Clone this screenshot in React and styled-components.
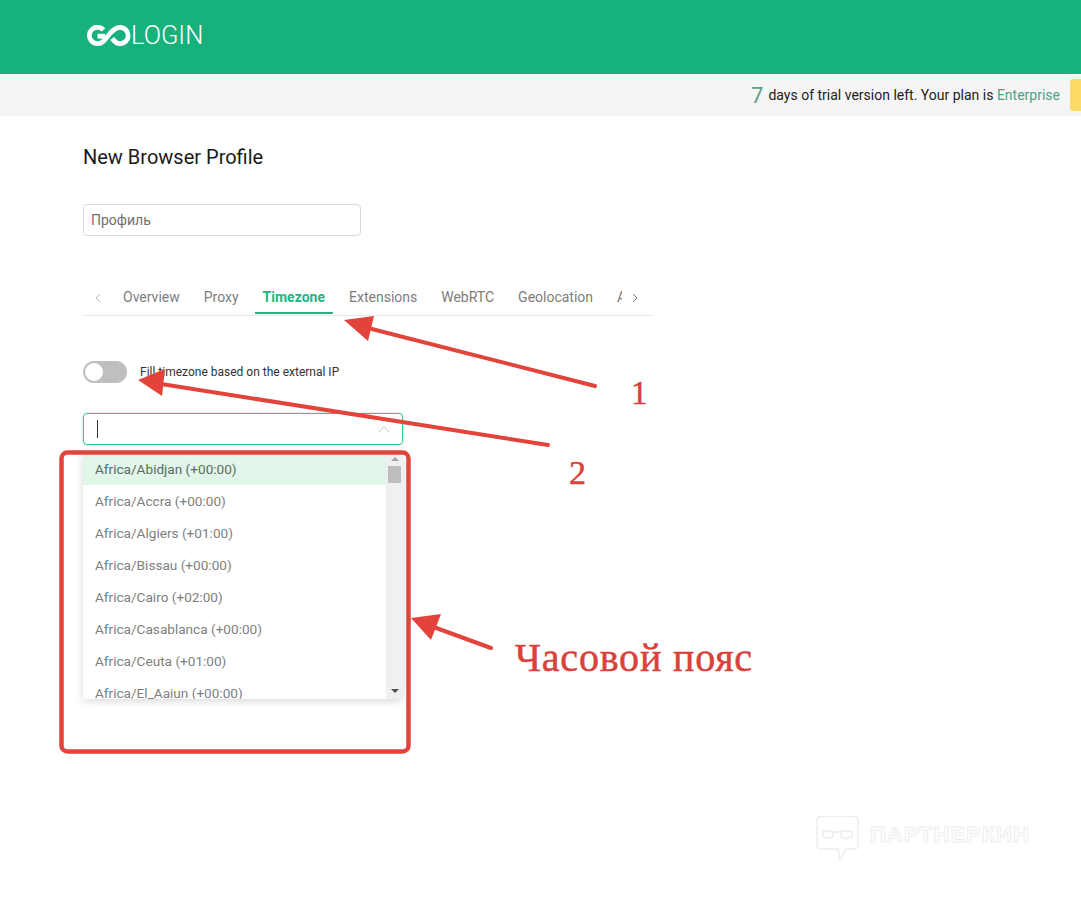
import React from 'react'
import styled, { createGlobalStyle } from 'styled-components'

const GlobalStyle = createGlobalStyle`
	html, body {
		margin: 0;
		padding: 0;
		background: #fff;
		font-family: Roboto, "Liberation Sans", sans-serif;
	}
`

const Page = styled.div`
	position: relative;
	width: 1081px;
	height: 913px;
	overflow: hidden;
	background: #fff;
`

const Header = styled.header`
	height: 74px;
	background: #17b17c;
	display: flex;
	align-items: center;
	padding-left: 87px;
	padding-bottom: 4px;
	box-sizing: border-box;
`

const LogoWord = styled.span`
	color: #fff;
	font-size: 25.5px;
	font-weight: 300;
	line-height: 30px;
`

const TrialBar = styled.div`
	height: 42px;
	background: #f5f5f5;
	display: flex;
	align-items: center;
	justify-content: flex-end;
	overflow: hidden;
`

const TrialDays = styled.span`
	color: #5f9f8a;
	font-size: 22px;
	font-weight: 400;
	margin-right: 5px;
`

const TrialText = styled.span`
	color: #222;
	font-size: 14px;
	margin-top: -1px;
`

const PlanName = styled.span`
	color: #4ba387;
`

const UpgradeStub = styled.div`
	flex: 0 0 11px;
	height: 32px;
	margin-left: 10px;
	background: #ffd965;
	border-radius: 3px 0 0 3px;
`

const Main = styled.main`
	padding: 29px 0 0 83px;
`

const Title = styled.h1`
	margin: 0;
	font-size: 20px;
	font-weight: 400;
	line-height: 24px;
	color: #1a1a1a;
`

const NameInput = styled.div`
	width: 278px;
	height: 32px;
	margin-top: 35px;
	box-sizing: border-box;
	padding-left: 7px;
	border: 1px solid #d9d9d9;
	border-radius: 4px;
	display: flex;
	align-items: center;
	font-size: 14px;
	color: #707070;
`

const TabsRow = styled.div`
	width: 570px;
	height: 36px;
	margin-top: 43px;
	display: flex;
	border-bottom: 1px solid #e8e8e8;
`

const TabArrow = styled.div`
	flex: 0 0 ${p => p.$width}px;
	display: flex;
	align-items: center;
	padding-left: ${p => p.$left}px;
	padding-top: 2px;
	box-sizing: border-box;
	height: 35px;
`

const TabStrip = styled.div`
	flex: 0 0 507px;
	display: flex;
	gap: 8px;
	overflow: hidden;
`

const Tab = styled.div`
	flex: 0 0 auto;
	padding: 0 8px;
	height: 33px;
	line-height: 37px;
	font-size: 14px;
	font-weight: ${p => (p.$active ? 700 : 400)};
	color: ${p => (p.$active ? '#1fb57f' : '#7d7d7d')};
	border-bottom: 2px solid ${p => (p.$active ? '#2fae7c' : 'transparent')};
`

const ToggleRow = styled.div`
	margin-top: 45px;
	height: 22px;
	display: flex;
	align-items: center;
	gap: 13px;
`

const Toggle = styled.div`
	width: 44px;
	height: 22px;
	border-radius: 11px;
	background: #bfbfbf;
	box-sizing: border-box;
	padding: 2px;
`

const ToggleKnob = styled.div`
	width: 18px;
	height: 18px;
	border-radius: 50%;
	background: #fff;
`

const ToggleLabel = styled.span`
	font-size: 12px;
	color: #333;
`

const SelectBox = styled.div`
	width: 320px;
	height: 32px;
	margin-top: 30px;
	box-sizing: border-box;
	border: 1px solid #3cc48f;
	border-radius: 4px;
	box-shadow: 0 0 1px 1px rgba(60, 196, 143, 0.18);
	padding: 0 12px 0 13px;
	display: flex;
	align-items: center;
	justify-content: space-between;
`

const Caret = styled.div`
	width: 1px;
	height: 18px;
	background: #333;
`

const Dropdown = styled.div`
	width: 320px;
	height: 246px;
	margin-top: 8px;
	display: flex;
	border-radius: 4px;
	overflow: hidden;
	box-shadow: 0 2px 8px rgba(0, 0, 0, 0.16);
`

const OptionList = styled.div`
	flex: 1;
	overflow: hidden;
`

const Option = styled.div`
	height: 32px;
	padding-left: 12px;
	line-height: 33px;
	font-size: 13.6px;
	color: ${p => (p.$active ? '#5c6a62' : '#808080')};
	background: ${p => (p.$active ? '#e1f5e9' : '#fff')};
`

const Scrollbar = styled.div`
	flex: 0 0 17px;
	background: #f0f0f0;
	display: flex;
	flex-direction: column;
	align-items: center;
	position: relative;
`

const ScrollUp = styled.div`
	margin-top: 4px;
	width: 0;
	height: 0;
	border-left: 4px solid transparent;
	border-right: 4px solid transparent;
	border-bottom: 4px solid #a3a3a3;
`

const ScrollThumb = styled.div`
	margin-top: 5px;
	width: 13px;
	height: 17px;
	background: #bdbdbd;
`

const ScrollDown = styled.div`
	margin-top: auto;
	margin-bottom: 6px;
	width: 0;
	height: 0;
	border-left: 4px solid transparent;
	border-right: 4px solid transparent;
	border-top: 4px solid #505050;
`

const Overlay = styled.svg`
	position: absolute;
	left: 0;
	top: 0;
	pointer-events: none;
`

const Note = styled.div`
	position: absolute;
	left: ${p => p.$x}px;
	top: ${p => p.$y}px;
	font-family: "Liberation Serif", serif;
	font-size: ${p => p.$size}px;
	letter-spacing: ${p => p.$spacing || 0}px;
	-webkit-text-stroke: 0.5px #d9423a;
	line-height: 1;
	color: #d9423a;
	white-space: nowrap;
`

const Watermark = styled.div`
	position: absolute;
	left: 816px;
	top: 815px;
	display: flex;
	align-items: center;
	gap: 10px;
`

const WatermarkText = styled.span`
	font-family: "Liberation Sans", sans-serif;
	font-size: 22px;
	font-weight: 700;
	letter-spacing: 1px;
	color: #fff;
	-webkit-text-stroke: 1px #eeeeee;
	margin-top: -8px;
`

const OPTIONS = [
	'Africa/Abidjan (+00:00)',
	'Africa/Accra (+00:00)',
	'Africa/Algiers (+01:00)',
	'Africa/Bissau (+00:00)',
	'Africa/Cairo (+02:00)',
	'Africa/Casablanca (+00:00)',
	'Africa/Ceuta (+01:00)',
	'Africa/El_Aaiun (+00:00)',
]

const TABS = ['Overview', 'Proxy', 'Timezone', 'Extensions', 'WebRTC', 'Geolocation', 'Advanced']

const LogoMark = () => (
	<svg width="44" height="21" viewBox="0 0 44 21" fill="none" stroke="#fff" strokeWidth="4.8">
		<path d="M16.5 4.8 A8.2 8.2 0 1 0 15.5 17 C20 13.5 25 2.3 33 2.3 A8.2 8.2 0 1 1 33 18.7 C29 18.7 27 16 25.2 13.5" />
		<path d="M10.5 11.2 H18" />
	</svg>
)

const Chevron = ({ dir, color }) => (
	<svg width="8" height="10" viewBox="0 0 8 10" fill="none" stroke={color} strokeWidth="1">
		<path d={dir === 'left' ? 'M6 1 L2 5 L6 9' : 'M2 1 L6 5 L2 9'} />
	</svg>
)

const Arrows = () => (
	<Overlay width="1081" height="913" viewBox="0 0 1081 913">
		<g stroke="#e2433a" strokeLinecap="round" fill="none">
			<rect x="61.5" y="452.5" width="347" height="299" rx="6" strokeWidth="4.5" />
			<path d="M360 326 L595 386" strokeWidth="4" />
			<path d="M155 383 L548 445" strokeWidth="4" />
			<path d="M428 625 L491 648" strokeWidth="4" />
		</g>
		<g fill="#e2433a">
			<polygon points="344,320 374,316 368,341" />
			<polygon points="138,380 165,369 162,396" />
			<polygon points="411,618 441,614 431,640" />
		</g>
	</Overlay>
)

const WatermarkIcon = () => (
	<svg width="44" height="48" viewBox="0 0 44 48" fill="none" stroke="#eeeeee" strokeWidth="1.5">
		<path d="M4 1.5 H38 Q42 1.5 42 5.5 V30 Q42 34 38 34 H30 L24 45 L22 34 H4 Q1 34 1 30 V5.5 Q1 1.5 4 1.5 Z" />
		<path d="M7 16 H17 V20 Q17 23 14 23 H10 Q7 23 7 20 Z" />
		<path d="M25 16 H36 V20 Q36 23 33 23 H28 Q25 23 25 20 Z" />
		<path d="M17 17 H25" />
	</svg>
)

export default function App() {
	return (
		<Page>
			<GlobalStyle />
			<Header>
				<LogoMark />
				<LogoWord>LOGIN</LogoWord>
			</Header>
			<TrialBar>
				<TrialDays>7</TrialDays>
				<TrialText>days of trial version left. Your plan is <PlanName>Enterprise</PlanName></TrialText>
				<UpgradeStub />
			</TrialBar>
			<Main>
				<Title>New Browser Profile</Title>
				<NameInput>Профиль</NameInput>
				<TabsRow>
					<TabArrow $width={32} $left={11}><Chevron dir="left" color="#b5b5b5" /></TabArrow>
					<TabStrip>
						{TABS.map(t => <Tab key={t} $active={t === 'Timezone'}>{t}</Tab>)}
					</TabStrip>
					<TabArrow $width={31} $left={9}><Chevron dir="right" color="#777" /></TabArrow>
				</TabsRow>
				<ToggleRow>
					<Toggle><ToggleKnob /></Toggle>
					<ToggleLabel>Fill timezone based on the external IP</ToggleLabel>
				</ToggleRow>
				<SelectBox>
					<Caret />
					<svg width="12" height="8" viewBox="0 0 12 8" fill="none" stroke="#c4c4c4" strokeWidth="1">
						<path d="M1 7 L6 1.5 L11 7" />
					</svg>
				</SelectBox>
				<Dropdown>
					<OptionList>
						{OPTIONS.map((o, i) => <Option key={o} $active={i === 0}>{o}</Option>)}
					</OptionList>
					<Scrollbar>
						<ScrollUp />
						<ScrollThumb />
						<ScrollDown />
					</Scrollbar>
				</Dropdown>
			</Main>
			<Arrows />
			<Note $x={631} $y={377} $size={33}>1</Note>
			<Note $x={569} $y={456} $size={34}>2</Note>
			<Note $x={515} $y={638} $size={40} $spacing={0.8}>Часовой пояс</Note>
			<Watermark>
				<WatermarkIcon />
				<WatermarkText>ПАРТНЕРКИН</WatermarkText>
			</Watermark>
		</Page>
	)
}
